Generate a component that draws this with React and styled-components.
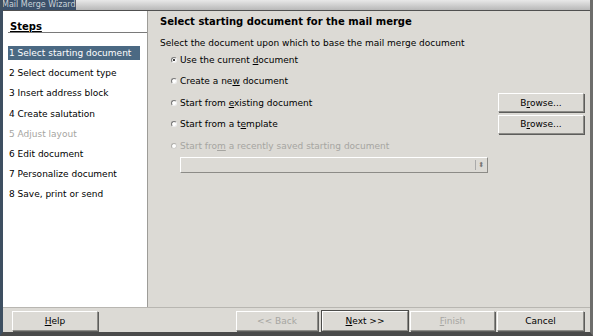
import React from "react";
import styled, { createGlobalStyle, css } from "styled-components";

const Global = createGlobalStyle`
  html, body { margin: 0; padding: 0; background: #dcdad5; }
  body { font-family: "DejaVu Sans", "Liberation Sans", sans-serif; font-size: 9px; color: #000; }
`;

const Window = styled.div`
  width: 593px;
  height: 336px;
  box-sizing: border-box;
  display: flex;
  flex-direction: column;
  background: #dcdad5;
  border-left: 3px solid #3e4f61;
  border-right: 3px solid #6d6d6b;
  border-bottom: 4px solid #4a4a4a;
  overflow: hidden;
`;

const TitleBar = styled.div`
  height: 10px;
  flex-shrink: 0;
  display: flex;
  background: linear-gradient(#e8e8e8, #b8b8b8);
  border-bottom: 1px solid #505050;
  margin-left: -3px;
  margin-right: -3px;
`;

const TitleTab = styled.div`
  width: 74px;
  padding-left: 2px;
  background: #3b506a;
  color: #c8d0d8;
  font-size: 8px;
  line-height: 10px;
  white-space: nowrap;
`;

const Body = styled.div`
  flex: 1;
  display: flex;
  min-height: 0;
`;

const Sidebar = styled.div`
  width: 144px;
  background: #fff;
  border-right: 1px solid #9d9c98;
  display: flex;
  flex-direction: column;
  padding-top: 10px;
`;

const StepsHead = styled.div`
  margin-left: 5px;
  padding-left: 2px;
  border-bottom: 1px solid #7a7a7a;
  font-weight: bold;
  font-size: 10px;
  text-decoration: underline;
  line-height: 11px;
`;

const StepList = styled.div`
  display: flex;
  flex-direction: column;
  gap: 6.2px;
  padding: 13px 0 0 5px;
`;

const Step = styled.div`
  width: 131px;
  height: 14px;
  line-height: 14px;
  padding-left: 1px;
  white-space: nowrap;
  ${({ $active }) => $active && css`background: #4b6983; color: #fff;`}
  ${({ $disabled }) => $disabled && css`color: #a6a5a1;`}
`;

const Main = styled.div`
  flex: 1;
  display: flex;
  flex-direction: column;
  padding: 4px 6px 0 12px;
`;

const Heading = styled.div`
  font-weight: bold;
  font-size: 10px;
  line-height: 14px;
  margin-bottom: 8px;
`;

const Intro = styled.div`
  line-height: 12px;
`;

const Options = styled.div`
  display: flex;
  flex-direction: column;
  padding-left: 11px;
`;

const OptionRow = styled.div`
  display: flex;
  align-items: center;
  height: 21.5px;
  ${({ $disabled }) => $disabled && css`color: #a6a5a1;`}
`;

const RadioMark = styled.span`
  width: 6px;
  height: 6px;
  border-radius: 50%;
  box-sizing: border-box;
  border: 1px solid ${({ $disabled }) => ($disabled ? "#b0afab" : "#777")};
  border-right-color: ${({ $disabled }) => ($disabled ? "#d0cfcb" : "#eee")};
  border-bottom-color: ${({ $disabled }) => ($disabled ? "#d0cfcb" : "#eee")};
  background: #fff;
  margin-right: 3px;
  display: flex;
  align-items: center;
  justify-content: center;
  &::after {
    content: "";
    width: 2px;
    height: 2px;
    border-radius: 50%;
    background: ${({ $checked }) => ($checked ? "#000" : "transparent")};
  }
`;

const Label = styled.span`
  flex: 1;
  white-space: nowrap;
`;

const U = styled.span`
  text-decoration: underline;
`;

const Button = styled.button`
  font-family: inherit;
  font-size: 9px;
  color: ${({ disabled }) => (disabled ? "#a6a5a1" : "#000")};
  background: #dcdad5;
  width: ${({ $w }) => $w || 86}px;
  height: ${({ $h }) => $h || 19}px;
  padding: 0;
  box-sizing: border-box;
  border: 1px solid;
  border-color: #fff #8c8b87 #8c8b87 #fff;
  box-shadow: 1px 1px 0 #5d5d5b;
  ${({ $default }) =>
    $default &&
    css`
      outline: 1px solid #4d4d4b;
      outline-offset: 0;
      margin-left: 2px;
    `}
`;

const Combo = styled.div`
  margin-left: 9px;
  width: 308px;
  height: 16px;
  box-sizing: border-box;
  border: 1px solid;
  border-color: #fff #8c8b87 #8c8b87 #fff;
  display: flex;
  justify-content: flex-end;
  align-items: center;
  padding-right: 3px;
`;

const Spin = styled.span`
  border-left: 1px solid #aaa;
  padding-left: 2px;
  font-size: 7px;
  color: #777;
  line-height: 10px;
`;

const Footer = styled.div`
  flex-shrink: 0;
  border-top: 1px solid #b8b6b1;
  display: flex;
  align-items: flex-start;
  padding: 3px 6px 0 9px;
  box-sizing: border-box;
  height: 25px;
`;

const FooterRight = styled.div`
  margin-left: auto;
  display: flex;
  gap: 2px;
`;

export default function App() {
  return (
    <>
      <Global />
      <Window>
        <TitleBar>
          <TitleTab>Mail Merge Wizard</TitleTab>
        </TitleBar>
        <Body>
          <Sidebar>
            <StepsHead>Steps</StepsHead>
            <StepList>
              <Step $active>1 Select starting document</Step>
              <Step>2 Select document type</Step>
              <Step>3 Insert address block</Step>
              <Step>4 Create salutation</Step>
              <Step $disabled>5 Adjust layout</Step>
              <Step>6 Edit document</Step>
              <Step>7 Personalize document</Step>
              <Step>8 Save, print or send</Step>
            </StepList>
          </Sidebar>
          <Main>
            <Heading>Select starting document for the mail merge</Heading>
            <Intro>Select the document upon which to base the mail merge document</Intro>
            <Options>
              <OptionRow>
                <RadioMark $checked />
                <Label>Use the current <U>d</U>ocument</Label>
              </OptionRow>
              <OptionRow>
                <RadioMark />
                <Label>Create a ne<U>w</U> document</Label>
              </OptionRow>
              <OptionRow>
                <RadioMark />
                <Label>Start from <U>e</U>xisting document</Label>
                <Button>B<U>r</U>owse...</Button>
              </OptionRow>
              <OptionRow>
                <RadioMark />
                <Label>Start from a t<U>e</U>mplate</Label>
                <Button>B<U>r</U>owse...</Button>
              </OptionRow>
              <OptionRow $disabled>
                <RadioMark $disabled />
                <Label>Start fro<U>m</U> a recently saved starting document</Label>
              </OptionRow>
              <Combo>
                <Spin>⬍</Spin>
              </Combo>
            </Options>
          </Main>
        </Body>
        <Footer>
          <Button $w={86} $h={20}><U>H</U>elp</Button>
          <FooterRight>
            <Button $w={82} $h={20} disabled>&lt;&lt; Back</Button>
            <Button $w={86} $h={20} $default><U>N</U>ext &gt;&gt;</Button>
            <Button $w={85} $h={20} disabled><U>F</U>inish</Button>
            <Button $w={87} $h={20}>Cancel</Button>
          </FooterRight>
        </Footer>
      </Window>
    </>
  );
}
